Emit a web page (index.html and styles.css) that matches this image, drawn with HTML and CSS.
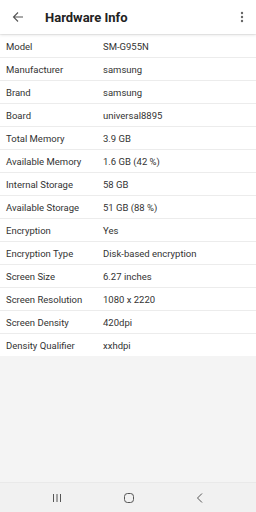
FILE: index.html
```html
<!DOCTYPE html>
<html lang="en">
<head>
    <meta charset="UTF-8">
    <meta name="viewport" content="width=device-width, initial-scale=1.0">
    <title>Hardware Info</title>
    <link rel="stylesheet" href="styles.css">
</head>
<body>
    <div class="screen">
        <header class="app-bar">
            <svg class="back-icon" width="12" height="12" viewBox="0 0 12 12">
                <path d="M11 6H1.5M6 1.5L1.5 6L6 10.5" fill="none" stroke="#555" stroke-width="1.1"/>
            </svg>
            <h1 class="app-title">Hardware Info</h1>
            <svg class="menu-icon" width="4" height="12" viewBox="0 0 4 12">
                <circle cx="2" cy="2" r="1.2" fill="#666"/>
                <circle cx="2" cy="6" r="1.2" fill="#666"/>
                <circle cx="2" cy="10" r="1.2" fill="#666"/>
            </svg>
        </header>

        <ul class="info-list">
            <li class="info-row"><span class="info-label">Model</span><span class="info-value">SM-G955N</span></li>
            <li class="info-row"><span class="info-label">Manufacturer</span><span class="info-value">samsung</span></li>
            <li class="info-row"><span class="info-label">Brand</span><span class="info-value">samsung</span></li>
            <li class="info-row"><span class="info-label">Board</span><span class="info-value">universal8895</span></li>
            <li class="info-row"><span class="info-label">Total Memory</span><span class="info-value">3.9 GB</span></li>
            <li class="info-row"><span class="info-label">Available Memory</span><span class="info-value">1.6 GB (42 %)</span></li>
            <li class="info-row"><span class="info-label">Internal Storage</span><span class="info-value">58 GB</span></li>
            <li class="info-row"><span class="info-label">Available Storage</span><span class="info-value">51 GB (88 %)</span></li>
            <li class="info-row"><span class="info-label">Encryption</span><span class="info-value">Yes</span></li>
            <li class="info-row"><span class="info-label">Encryption Type</span><span class="info-value">Disk-based encryption</span></li>
            <li class="info-row"><span class="info-label">Screen Size</span><span class="info-value">6.27 inches</span></li>
            <li class="info-row"><span class="info-label">Screen Resolution</span><span class="info-value">1080 x 2220</span></li>
            <li class="info-row"><span class="info-label">Screen Density</span><span class="info-value">420dpi</span></li>
            <li class="info-row"><span class="info-label">Density Qualifier</span><span class="info-value">xxhdpi</span></li>
        </ul>

        <div class="spacer"></div>

        <nav class="nav-bar">
            <svg width="12" height="12" viewBox="0 0 12 12">
                <path d="M2.5 2v8M6 2v8M9.5 2v8" stroke="#555" stroke-width="1"/>
            </svg>
            <svg width="12" height="12" viewBox="0 0 12 12">
                <rect x="1.5" y="1.5" width="9" height="9" rx="3" fill="none" stroke="#555" stroke-width="1"/>
            </svg>
            <svg width="12" height="12" viewBox="0 0 12 12">
                <path d="M8 1.5L3.5 6L8 10.5" fill="none" stroke="#555" stroke-width="1"/>
            </svg>
        </nav>
    </div>
</body>
</html>
```

FILE: styles.css
```css
html, body {
    margin: 0;
    padding: 0;
}
body {
    font-family: Roboto, "Liberation Sans", sans-serif;
    background-color: #f4f4f4;
}
.screen {
    display: flex;
    flex-direction: column;
    height: 512px;
}
.app-bar {
    display: flex;
    align-items: center;
    height: 34px;
    padding: 0 12px 0 12px;
    background-color: #fff;
    box-shadow: 0 1px 3px rgba(0,0,0,0.12);
    position: relative; /* keep shadow above list */
    z-index: 1;
}
.back-icon {
    flex: none;
}
.app-title {
    flex: 1;
    margin: 0 0 0 21px;
    font-size: 13px;
    font-weight: bold;
    color: #222;
}
.menu-icon {
    flex: none;
}
.info-list {
    list-style: none;
    margin: 0;
    padding: 0;
    margin-top: 1px;
    background-color: #fff;
}
.info-row {
    display: flex;
    align-items: center;
    height: 22px;
    padding-left: 6px;
    border-bottom: 1px solid #ececec;
    font-size: 9.5px;
    color: #333;
}
.info-row:last-child {
    border-bottom: none;
}
.info-label {
    width: 97px;
}
.info-value {
    flex: 1;
}
.spacer {
    flex: 1;
}
.nav-bar {
    display: flex;
    justify-content: space-between;
    align-items: center;
    height: 29px;
    padding: 0 50px 0 51px;
    background-color: #f1f1f1;
    border-top: 1px solid #e9e9e9;
}
```
